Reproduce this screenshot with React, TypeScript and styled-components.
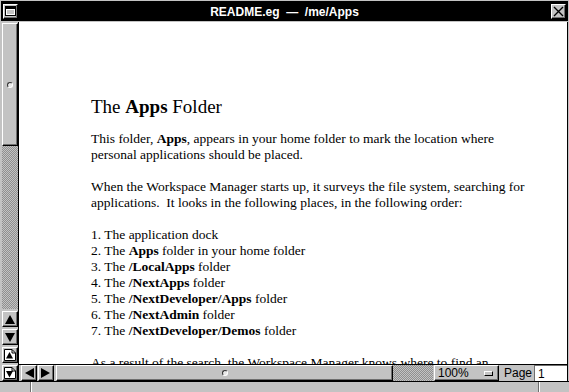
import React from "react";
import styled, { createGlobalStyle } from "styled-components";

const gray = "#c3c3c3";
const dark = "#6e6e6e";
const ui = `"Liberation Sans", Arial, Helvetica, sans-serif`;
const serif = `"Liberation Serif", "Times New Roman", serif`;

const GlobalStyle = createGlobalStyle`
  html, body {
    margin: 0;
    padding: 0;
    background: ${gray};
  }
  body {
    width: 569px;
    height: 392px;
    overflow: hidden;
  }
`;

const Window = styled.div`
  width: 569px;
  height: 392px;
  display: flex;
  flex-direction: column;
  background: ${gray};
  overflow: hidden;
`;

const TitleBar = styled.div`
  flex: none;
  height: 20px;
  background: #000;
  border: 1px solid ${gray};
  display: flex;
  align-items: center;
  padding: 0 2px;
`;

const Bevel = styled.div`
  box-sizing: border-box;
  background: ${gray};
  border: 1px solid;
  border-color: #fff #000 #000 #fff;
  box-shadow: inset -1px -1px 0 ${dark};
`;

const TitleButton = styled(Bevel)`
  flex: none;
  width: 15px;
  height: 15px;
  display: flex;
  align-items: center;
  justify-content: center;
`;

const Title = styled.div`
  flex: 1;
  text-align: center;
  color: #fff;
  font-family: ${ui};
  font-weight: bold;
  font-size: 12px;
  white-space: pre;
  padding-top: 1px;
`;

const Body = styled.div`
  flex: none;
  height: 359px;
  display: flex;
`;

const VScroller = styled.div`
  flex: none;
  width: 16px;
  padding: 1px 0 0 2px;
  border-right: 1px solid #000;
  display: flex;
  flex-direction: column;
`;

const Stipple = styled.div`
  flex: 1;
  background-color: ${gray};
  background-image: conic-gradient(
    #8f8f8f 25%,
    transparent 0 50%,
    #8f8f8f 0 75%,
    transparent 0
  );
  background-size: 2px 2px;
`;

const Knob = styled(Bevel)<{ $size: number; $vertical?: boolean }>`
  flex: none;
  ${(p) => (p.$vertical ? `height: ${p.$size}px;` : `width: ${p.$size}px;`)}
  display: flex;
  align-items: center;
  justify-content: center;
`;

const Dimple = styled.span`
  display: block;
  width: 4px;
  height: 4px;
  border-radius: 50%;
  background: #e8e8e8;
  border: 1px solid;
  border-color: #333 #fff #fff #333;
`;

const ScrollButton = styled(Bevel)`
  flex: none;
  width: 16px;
  height: 16px;
  margin-top: 2px;
  display: flex;
  align-items: center;
  justify-content: center;
`;

const HButton = styled(ScrollButton)`
  margin-top: 0;
  margin-left: 1px;
  &:first-child {
    margin-left: 2px;
  }
`;

const Main = styled.div`
  flex: 1;
  display: flex;
  flex-direction: column;
  border-right: 1px solid #000;
  margin-right: 1px;
`;

const Document = styled.div`
  flex: 1;
  background: #fff;
  overflow: hidden;
  padding: 74px 0 0 72px;
  font-family: ${serif};
  color: #000;
`;

const Heading = styled.h1`
  margin: 0 0 13px;
  font-size: 19px;
  line-height: 22px;
  font-weight: normal;
  white-space: pre;
`;

const Paragraph = styled.div`
  margin-bottom: 16px;
`;

const Line = styled.div`
  height: 16px;
  line-height: 16px;
  font-size: 13.5px;
  white-space: pre;
`;

const HScroller = styled.div`
  flex: none;
  height: 16px;
  border-top: 1px solid #000;
  display: flex;
  align-items: stretch;
`;

const ScrollArea = styled.div`
  flex: none;
  width: 377px;
  margin-left: 2px;
  display: flex;
`;

const Popup = styled(Bevel)`
  flex: none;
  width: 65px;
  margin-left: 1px;
  display: flex;
  align-items: center;
  padding: 0 5px 0 3px;
  font-family: ${ui};
  font-size: 12px;
  color: #000;
`;

const PopupMark = styled.span`
  flex: none;
  display: block;
  margin-left: auto;
  width: 9px;
  height: 5px;
  box-sizing: border-box;
  border: 1px solid;
  border-color: #fff #000 #000 #fff;
  background: ${gray};
`;

const PageLabel = styled.span`
  flex: none;
  margin-left: 5px;
  display: flex;
  align-items: center;
  font-family: ${ui};
  font-size: 12px;
  color: #000;
`;

const PageField = styled.div`
  flex: 1;
  margin-left: 2px;
  background: #fff;
  border-top: 1px solid ${dark};
  border-left: 1px solid ${dark};
  display: flex;
  align-items: center;
  padding-left: 3px;
  font-family: ${ui};
  font-size: 12px;
  color: #000;
`;

const ResizeBar = styled.div`
  flex: 1;
  border-top: 1px solid #000;
  display: flex;
`;

const ResizeSegment = styled.div<{ $width?: number }>`
  ${(p) => (p.$width ? `flex: none; width: ${p.$width}px;` : "flex: 1;")}
  & + & {
    border-left: 1px solid ${dark};
    box-shadow: inset 1px 0 0 #fff;
  }
`;

const Arrow = ({ dir }: { dir: "up" | "down" | "left" | "right" }) => {
  const pts = {
    up: "5,1 10,10 0,10",
    down: "0,1 10,1 5,10",
    left: "1,5 10,0 10,10",
    right: "0,0 9,5 0,10",
  }[dir];
  return (
    <svg width="10" height="11" viewBox="0 0 10 11">
      <polygon points={pts} fill="#000" />
    </svg>
  );
};

const PageIcon = ({ dir }: { dir: "up" | "down" }) => (
  <svg width="12" height="12" viewBox="0 0 12 12">
    <path
      d="M0.5 0.5 H8 L11.5 4 V11.5 H0.5 Z"
      fill="#fff"
      stroke="#000"
      strokeWidth="1"
    />
    <path d="M8 0.5 V4 H11.5" fill="none" stroke="#000" strokeWidth="1" />
    <polygon
      points={dir === "up" ? "5.5,3 9,9.5 2,9.5" : "2,4 9,4 5.5,10.5"}
      fill="#000"
    />
  </svg>
);

const MiniIcon = () => (
  <svg width="11" height="10" viewBox="0 0 11 10">
    <rect x="0.5" y="0.5" width="10" height="9" fill="#fff" stroke="#000" />
    <rect x="1" y="1" width="9" height="2" fill="#000" />
    <rect x="2" y="4" width="7" height="4" fill={gray} />
  </svg>
);

const CloseIcon = () => (
  <svg width="11" height="11" viewBox="0 0 11 11">
    <path d="M1 1 L10 10 M10 1 L1 10" stroke="#000" strokeWidth="1.4" />
  </svg>
);

const folders = [
  <>The application dock</>,
  <>
    The <b>Apps</b> folder in your home folder
  </>,
  <>
    The <b>/LocalApps</b> folder
  </>,
  <>
    The <b>/NextApps</b> folder
  </>,
  <>
    The <b>/NextDeveloper/Apps</b> folder
  </>,
  <>
    The <b>/NextAdmin</b> folder
  </>,
  <>
    The <b>/NextDeveloper/Demos</b> folder
  </>,
];

export default function App() {
  return (
    <>
      <GlobalStyle />
      <Window>
        <TitleBar>
          <TitleButton>
            <MiniIcon />
          </TitleButton>
          <Title>{"README.eg  —  /me/Apps"}</Title>
          <TitleButton>
            <CloseIcon />
          </TitleButton>
        </TitleBar>
        <Body>
          <VScroller>
            <Knob $vertical $size={123}>
              <Dimple />
            </Knob>
            <Stipple />
            <ScrollButton>
              <Arrow dir="up" />
            </ScrollButton>
            <ScrollButton>
              <Arrow dir="down" />
            </ScrollButton>
            <ScrollButton>
              <PageIcon dir="up" />
            </ScrollButton>
            <ScrollButton>
              <PageIcon dir="down" />
            </ScrollButton>
          </VScroller>
          <Main>
            <Document>
              <Heading>
                The <b>Apps</b> Folder
              </Heading>
              <Paragraph>
                <Line>
                  This folder, <b>Apps</b>, appears in your home folder to mark
                  the location where
                </Line>
                <Line>personal applications should be placed.</Line>
              </Paragraph>
              <Paragraph>
                <Line>
                  When the Workspace Manager starts up, it surveys the file
                  system, searching for
                </Line>
                <Line>
                  {"applications.  It looks in the following places, in the following order:"}
                </Line>
              </Paragraph>
              <Paragraph>
                {folders.map((f, i) => (
                  <Line key={i}>
                    {i + 1}. {f}
                  </Line>
                ))}
              </Paragraph>
              <Paragraph>
                <Line>
                  As a result of the search, the Workspace Manager knows where
                  to find an
                </Line>
              </Paragraph>
            </Document>
            <HScroller>
              <HButton>
                <Arrow dir="left" />
              </HButton>
              <HButton>
                <Arrow dir="right" />
              </HButton>
              <ScrollArea>
                <Knob $size={337}>
                  <Dimple />
                </Knob>
                <Stipple />
              </ScrollArea>
              <Popup>
                <span>100%</span>
                <PopupMark />
              </Popup>
              <PageLabel>Page</PageLabel>
              <PageField>1</PageField>
            </HScroller>
          </Main>
        </Body>
        <ResizeBar>
          <ResizeSegment $width={30} />
          <ResizeSegment />
          <ResizeSegment $width={30} />
        </ResizeBar>
      </Window>
    </>
  );
}
